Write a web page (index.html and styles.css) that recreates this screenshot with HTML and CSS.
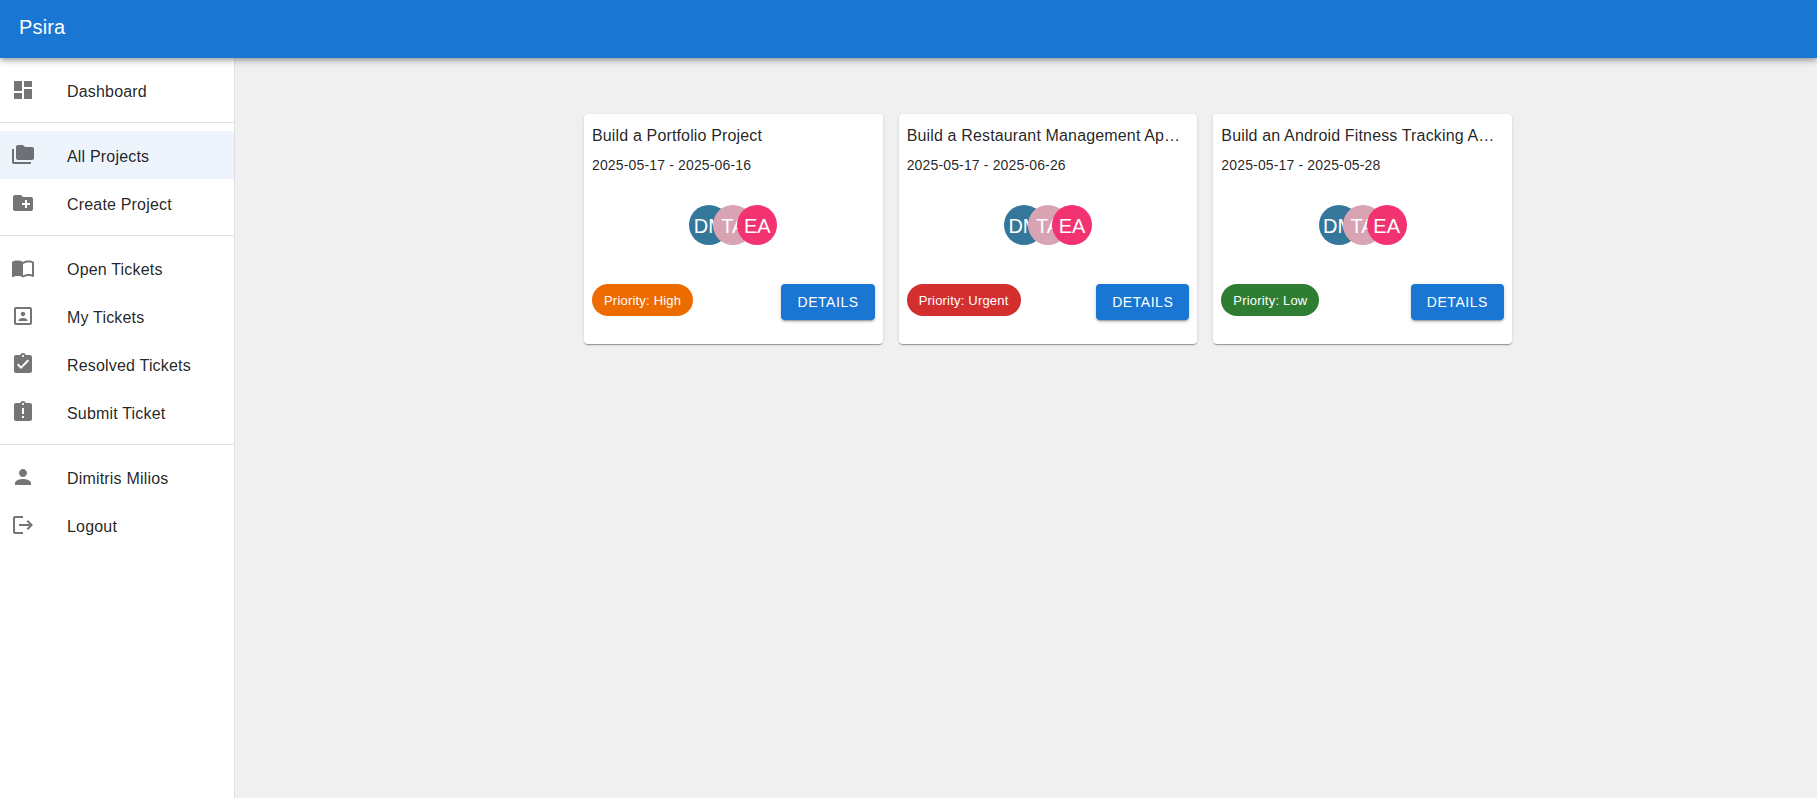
FILE: index.html
```html
<!DOCTYPE html>
<html lang="en">
<head>
<meta charset="utf-8">
<title>Psira</title>
<link rel="stylesheet" href="styles.css">
</head>
<body>
<header class="appbar"><h1 class="brand">Psira</h1></header>
<div class="layout">
  <nav class="sidebar">
    <a class="item"><svg class="icon" viewBox="0 0 24 24"><path d="M3 13h8V3H3v10zm0 8h8v-6H3v6zm10 0h8V11h-8v10zm0-18v6h8V3h-8z"/></svg><span class="label">Dashboard</span></a>
    <hr class="divider">
    <a class="item selected"><svg class="icon" viewBox="0 0 24 24"><path d="M3 6H1v13c0 1.100.9 2 2 2h17v-2H3V6z"/><path d="M21 4h-7l-2-2H7c-1.100 0-1.990.9-1.990 2L5 15c0 1.100.9 2 2 2h14c1.100 0 2-.9 2-2V6c0-1.100-.9-2-2-2z"/></svg><span class="label">All Projects</span></a>
    <a class="item"><svg class="icon" viewBox="0 0 24 24"><path d="M20 6h-8l-2-2H4c-1.110 0-1.990.89-1.990 2L2 18c0 1.110.89 2 2 2h16c1.110 0 2-.89 2-2V8c0-1.110-.89-2-2-2zm-1 8h-3v3h-2v-3h-3v-2h3V9h2v3h3v2z"/></svg><span class="label">Create Project</span></a>
    <hr class="divider">
    <a class="item"><svg class="icon" viewBox="0 0 24 24"><path d="M21 5c-1.110-.35-2.330-.5-3.500-.5-1.950 0-4.050.4-5.500 1.500-1.450-1.100-3.550-1.500-5.500-1.500S2.450 4.900 1 6v14.650c0 .25.25.5.5.5.1 0 .15-.05.25-.05C3.100 20.450 5.050 20 6.500 20c1.950 0 4.050.4 5.500 1.500 1.350-.85 3.800-1.500 5.500-1.500 1.650 0 3.350.3 4.750 1.050.1.05.15.05.25.05.25 0 .5-.25.5-.5V6c-.6-.45-1.250-.75-2-1zm0 13.500c-1.100-.35-2.300-.5-3.500-.5-1.700 0-4.150.65-5.500 1.500V8c1.350-.85 3.800-1.500 5.500-1.500 1.200 0 2.400.15 3.500.5v11.500z"/></svg><span class="label">Open Tickets</span></a>
    <a class="item"><svg class="icon" viewBox="0 0 24 24"><path d="M19 3H5c-1.110 0-2 .9-2 2v14c0 1.100.89 2 2 2h14c1.100 0 2-.9 2-2V5c0-1.100-.9-2-2-2zm0 16H5V5h14v14zM12 12.250c1.240 0 2.250-1.010 2.250-2.250S13.240 7.750 12 7.750 9.750 8.760 9.750 10s1.010 2.250 2.250 2.250zM16.500 16.250c0-1.500-3-2.250-4.500-2.250s-4.500.75-4.500 2.250V17h9v-.75z"/></svg><span class="label">My Tickets</span></a>
    <a class="item"><svg class="icon" viewBox="0 0 24 24"><path d="M19 3h-4.180C14.400 1.840 13.300 1 12 1c-1.300 0-2.400.84-2.820 2H5c-1.100 0-2 .9-2 2v14c0 1.100.9 2 2 2h14c1.100 0 2-.9 2-2V5c0-1.100-.9-2-2-2zm-7 0c.55 0 1 .45 1 1s-.45 1-1 1-1-.45-1-1 .45-1 1-1zm-2 14l-4-4 1.410-1.410L10 14.170l6.590-6.590L18 9l-8 8z"/></svg><span class="label">Resolved Tickets</span></a>
    <a class="item"><svg class="icon" viewBox="0 0 24 24"><path d="M19 3h-4.180C14.400 1.840 13.300 1 12 1c-1.300 0-2.400.84-2.820 2H5c-1.100 0-2 .9-2 2v14c0 1.100.9 2 2 2h14c1.100 0 2-.9 2-2V5c0-1.100-.9-2-2-2zm-6 15h-2v-2h2v2zm0-4h-2V8h2v6zm-1-9c-.55 0-1-.45-1-1s.45-1 1-1 1 .45 1 1-.45 1-1 1z"/></svg><span class="label">Submit Ticket</span></a>
    <hr class="divider">
    <a class="item"><svg class="icon" viewBox="0 0 24 24"><path d="M12 12c2.210 0 4-1.790 4-4s-1.790-4-4-4-4 1.790-4 4 1.790 4 4 4zm0 2c-2.670 0-8 1.340-8 4v2h16v-2c0-2.660-5.330-4-8-4z"/></svg><span class="label">Dimitris Milios</span></a>
    <a class="item"><svg class="icon" viewBox="0 0 24 24"><path d="M17 7l-1.410 1.410L18.170 11H8v2h10.170l-2.580 2.580L17 17l5-5zM4 5h8V3H4c-1.100 0-2 .9-2 2v14c0 1.100.9 2 2 2h8v-2H4V5z"/></svg><span class="label">Logout</span></a>
  </nav>
  <main class="main">
    <div class="grid">
      <article class="card">
        <h2 class="title">Build a Portfolio Project</h2>
        <p class="dates">2025-05-17 - 2025-06-16</p>
        <div class="avatars"><span class="avatar blue">DM</span><span class="avatar rose">TA</span><span class="avatar pink">EA</span></div>
        <div class="actions"><span class="chip high">Priority: High</span><button class="button">Details</button></div>
      </article>
      <article class="card">
        <h2 class="title">Build a Restaurant Management Ap…</h2>
        <p class="dates">2025-05-17 - 2025-06-26</p>
        <div class="avatars"><span class="avatar blue">DM</span><span class="avatar rose">TA</span><span class="avatar pink">EA</span></div>
        <div class="actions"><span class="chip urgent">Priority: Urgent</span><button class="button">Details</button></div>
      </article>
      <article class="card">
        <h2 class="title">Build an Android Fitness Tracking A…</h2>
        <p class="dates">2025-05-17 - 2025-05-28</p>
        <div class="avatars"><span class="avatar blue">DM</span><span class="avatar rose">TA</span><span class="avatar pink">EA</span></div>
        <div class="actions"><span class="chip low">Priority: Low</span><button class="button">Details</button></div>
      </article>
    </div>
  </main>
</div>
</body>
</html>
```
FILE: styles.css
```css
* { box-sizing: border-box; }
body {
  margin: 0;
  height: 100vh;
  display: flex;
  flex-direction: column;
  overflow: hidden;
  background: #f0f0f0;
  color: rgba(0, 0, 0, 0.87);
  font-family: "Liberation Sans", Arial, sans-serif;
}
.appbar {
  position: relative;
  z-index: 1;
  flex: none;
  height: 58px;
  padding: 11px 19px 0;
  background: #1976d2;
  color: #fff;
  box-shadow: 0 2px 4px -1px rgba(0,0,0,.2), 0 4px 5px 0 rgba(0,0,0,.14), 0 1px 10px 0 rgba(0,0,0,.12);
}
.brand { margin: 0; font-size: 20px; font-weight: 400; line-height: 32px; letter-spacing: .0075em; }
.layout { display: flex; flex: 1; min-height: 0; }
.sidebar {
  flex: none;
  width: 235px;
  padding-top: 8px;
  background: #fff;
  border-right: 1px solid #e0e0e0;
}
.item { display: flex; align-items: center; gap: 32px; height: 48px; padding-left: 11px; }
.item.selected { background: #edf4fc; }
.icon { flex: none; width: 24px; height: 24px; fill: rgba(0, 0, 0, 0.54); }
.label { font-size: 16px; line-height: 24px; letter-spacing: .0115em; padding-top: 3px; white-space: nowrap; }
.divider { margin: 8px 0; border: 0; height: 1px; background: #e0e0e0; }
.main { flex: 1; padding: 56px 0 0 349px; }
.grid { display: grid; grid-template-columns: repeat(3, minmax(0, 1fr)); gap: 16px; width: 928px; }
.card {
  height: 230px;
  padding: 8px;
  background: #fff;
  border-radius: 4px;
  box-shadow: 0 2px 1px -1px rgba(0,0,0,.2), 0 1px 1px 0 rgba(0,0,0,.14), 0 1px 3px 0 rgba(0,0,0,.12);
}
.title {
  margin: 0;
  font-size: 16px;
  font-weight: 400;
  line-height: 28px;
  letter-spacing: .00938em;
  white-space: nowrap;
}
.dates { margin: 5px 0 0; font-size: 14px; line-height: 20px; letter-spacing: .01071em; }
.avatars { display: flex; justify-content: center; margin-top: 30px; }
.avatar {
  display: flex;
  align-items: center;
  justify-content: center;
  width: 40px;
  height: 40px;
  border-radius: 50%;
  color: #fff;
  font-size: 20px;
  line-height: 20px;
  padding-top: 1px;
  position: relative;
}
.avatar + .avatar { margin-left: -16px; }
.blue { background: #34779b; }
.rose { background: #d8a3b3; }
.pink { background: #f33371; }
.actions { display: flex; justify-content: space-between; align-items: flex-start; margin-top: 39px; }
.chip {
  height: 32px;
  padding: 0 12px;
  border-radius: 16px;
  color: #fff;
  font-size: 13px;
  line-height: 33px;
  letter-spacing: .2px;
  white-space: nowrap;
}
.high { background: #ed6c02; }
.urgent { background: #d32f2f; }
.low { background: #2e7d32; }
.button {
  height: 36px;
  padding: 0 16px;
  border: 0;
  border-radius: 4px;
  background: #1976d2;
  color: #fff;
  font: 14px/24px "Liberation Sans", Arial, sans-serif;
  letter-spacing: .55px;
  text-transform: uppercase;
  box-shadow: 0 3px 1px -2px rgba(0,0,0,.2), 0 2px 2px 0 rgba(0,0,0,.14), 0 1px 5px 0 rgba(0,0,0,.12);
}
```
